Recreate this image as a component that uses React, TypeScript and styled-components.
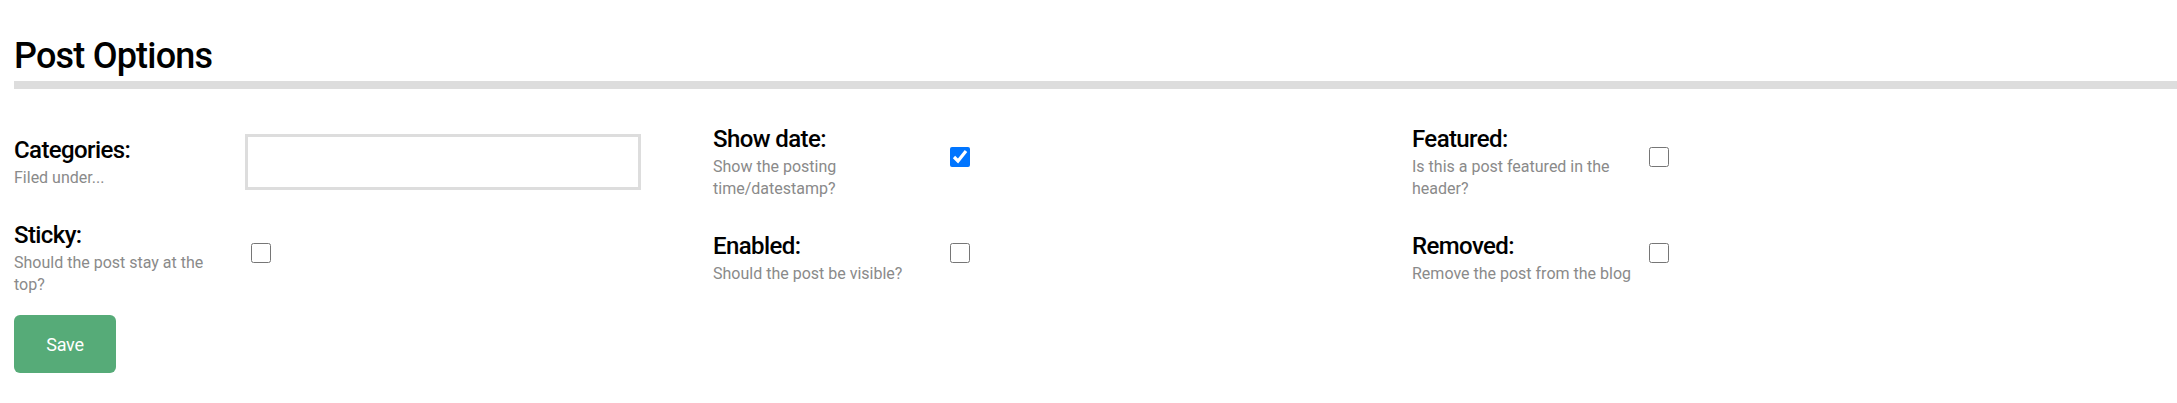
import React from "react";
import styled, { createGlobalStyle } from "styled-components";

const GlobalStyle = createGlobalStyle`
  html, body {
    margin: 0;
    padding: 0;
    background: #ffffff;
  }
  body {
    font-family: Roboto, "Liberation Sans", sans-serif;
    color: #000;
  }
`;

const Page = styled.div`
  padding: 0 0 0 14px;
`;

const Title = styled.h2`
  margin: 0;
  padding-top: 33px;
  height: 46px;
  font-size: 36px;
  line-height: 46px;
  font-weight: 500;
  letter-spacing: -0.8px;
  color: #000;
`;

const Rule = styled.div`
  margin-top: 2px;
  height: 8px;
  background: #dddddd;
`;

const Grid = styled.div`
  display: grid;
  grid-template-columns: repeat(3, 699px);
  grid-auto-rows: 77px;
  row-gap: 19px;
  align-items: center;
  margin-top: 34px;
`;

const Field = styled.div`
  display: flex;
  align-items: center;
`;

const LabelBlock = styled.div`
  width: 221px;
  padding-right: 10px;
  flex: none;
`;

const Label = styled.div`
  font-size: 24px;
  line-height: 33px;
  font-weight: 500;
  letter-spacing: -0.6px;
  color: #000;
`;

const Help = styled.div`
  font-size: 16px;
  line-height: 22px;
  color: #8a8a8a;
`;

const TextInput = styled.input`
  box-sizing: border-box;
  width: 396px;
  height: 56px;
  border: 3px solid #dddddd;
  border-radius: 0;
  outline: none;
  padding: 0 10px;
  font-family: inherit;
  font-size: 18px;
`;

const Check = styled.input`
  width: 20px;
  height: 20px;
  margin: 0 0 9px 6px;
`;

const SaveButton = styled.button`
  margin-top: 19px;
  width: 102px;
  height: 58px;
  border: none;
  border-radius: 6px;
  background: #56ab78;
  color: #ffffff;
  font-family: inherit;
  font-size: 18px;
  letter-spacing: -0.3px;
  cursor: pointer;
`;

type Opt = {
  label: string;
  help: string;
  kind: "text" | "check";
  checked?: boolean;
};

const options: Opt[] = [
  { label: "Categories:", help: "Filed under...", kind: "text" },
  { label: "Show date:", help: "Show the posting time/datestamp?", kind: "check", checked: true },
  { label: "Featured:", help: "Is this a post featured in the header?", kind: "check" },
  { label: "Sticky:", help: "Should the post stay at the top?", kind: "check" },
  { label: "Enabled:", help: "Should the post be visible?", kind: "check" },
  { label: "Removed:", help: "Remove the post from the blog", kind: "check" },
];

export default function App() {
  return (
    <>
      <GlobalStyle />
      <Page>
        <Title>Post Options</Title>
        <Rule />
        <Grid>
          {options.map((o) => (
            <Field key={o.label}>
              <LabelBlock>
                <Label>{o.label}</Label>
                <Help>{o.help}</Help>
              </LabelBlock>
              {o.kind === "text" ? (
                <TextInput type="text" />
              ) : (
                <Check type="checkbox" defaultChecked={o.checked} />
              )}
            </Field>
          ))}
        </Grid>
        <SaveButton>Save</SaveButton>
      </Page>
    </>
  );
}
